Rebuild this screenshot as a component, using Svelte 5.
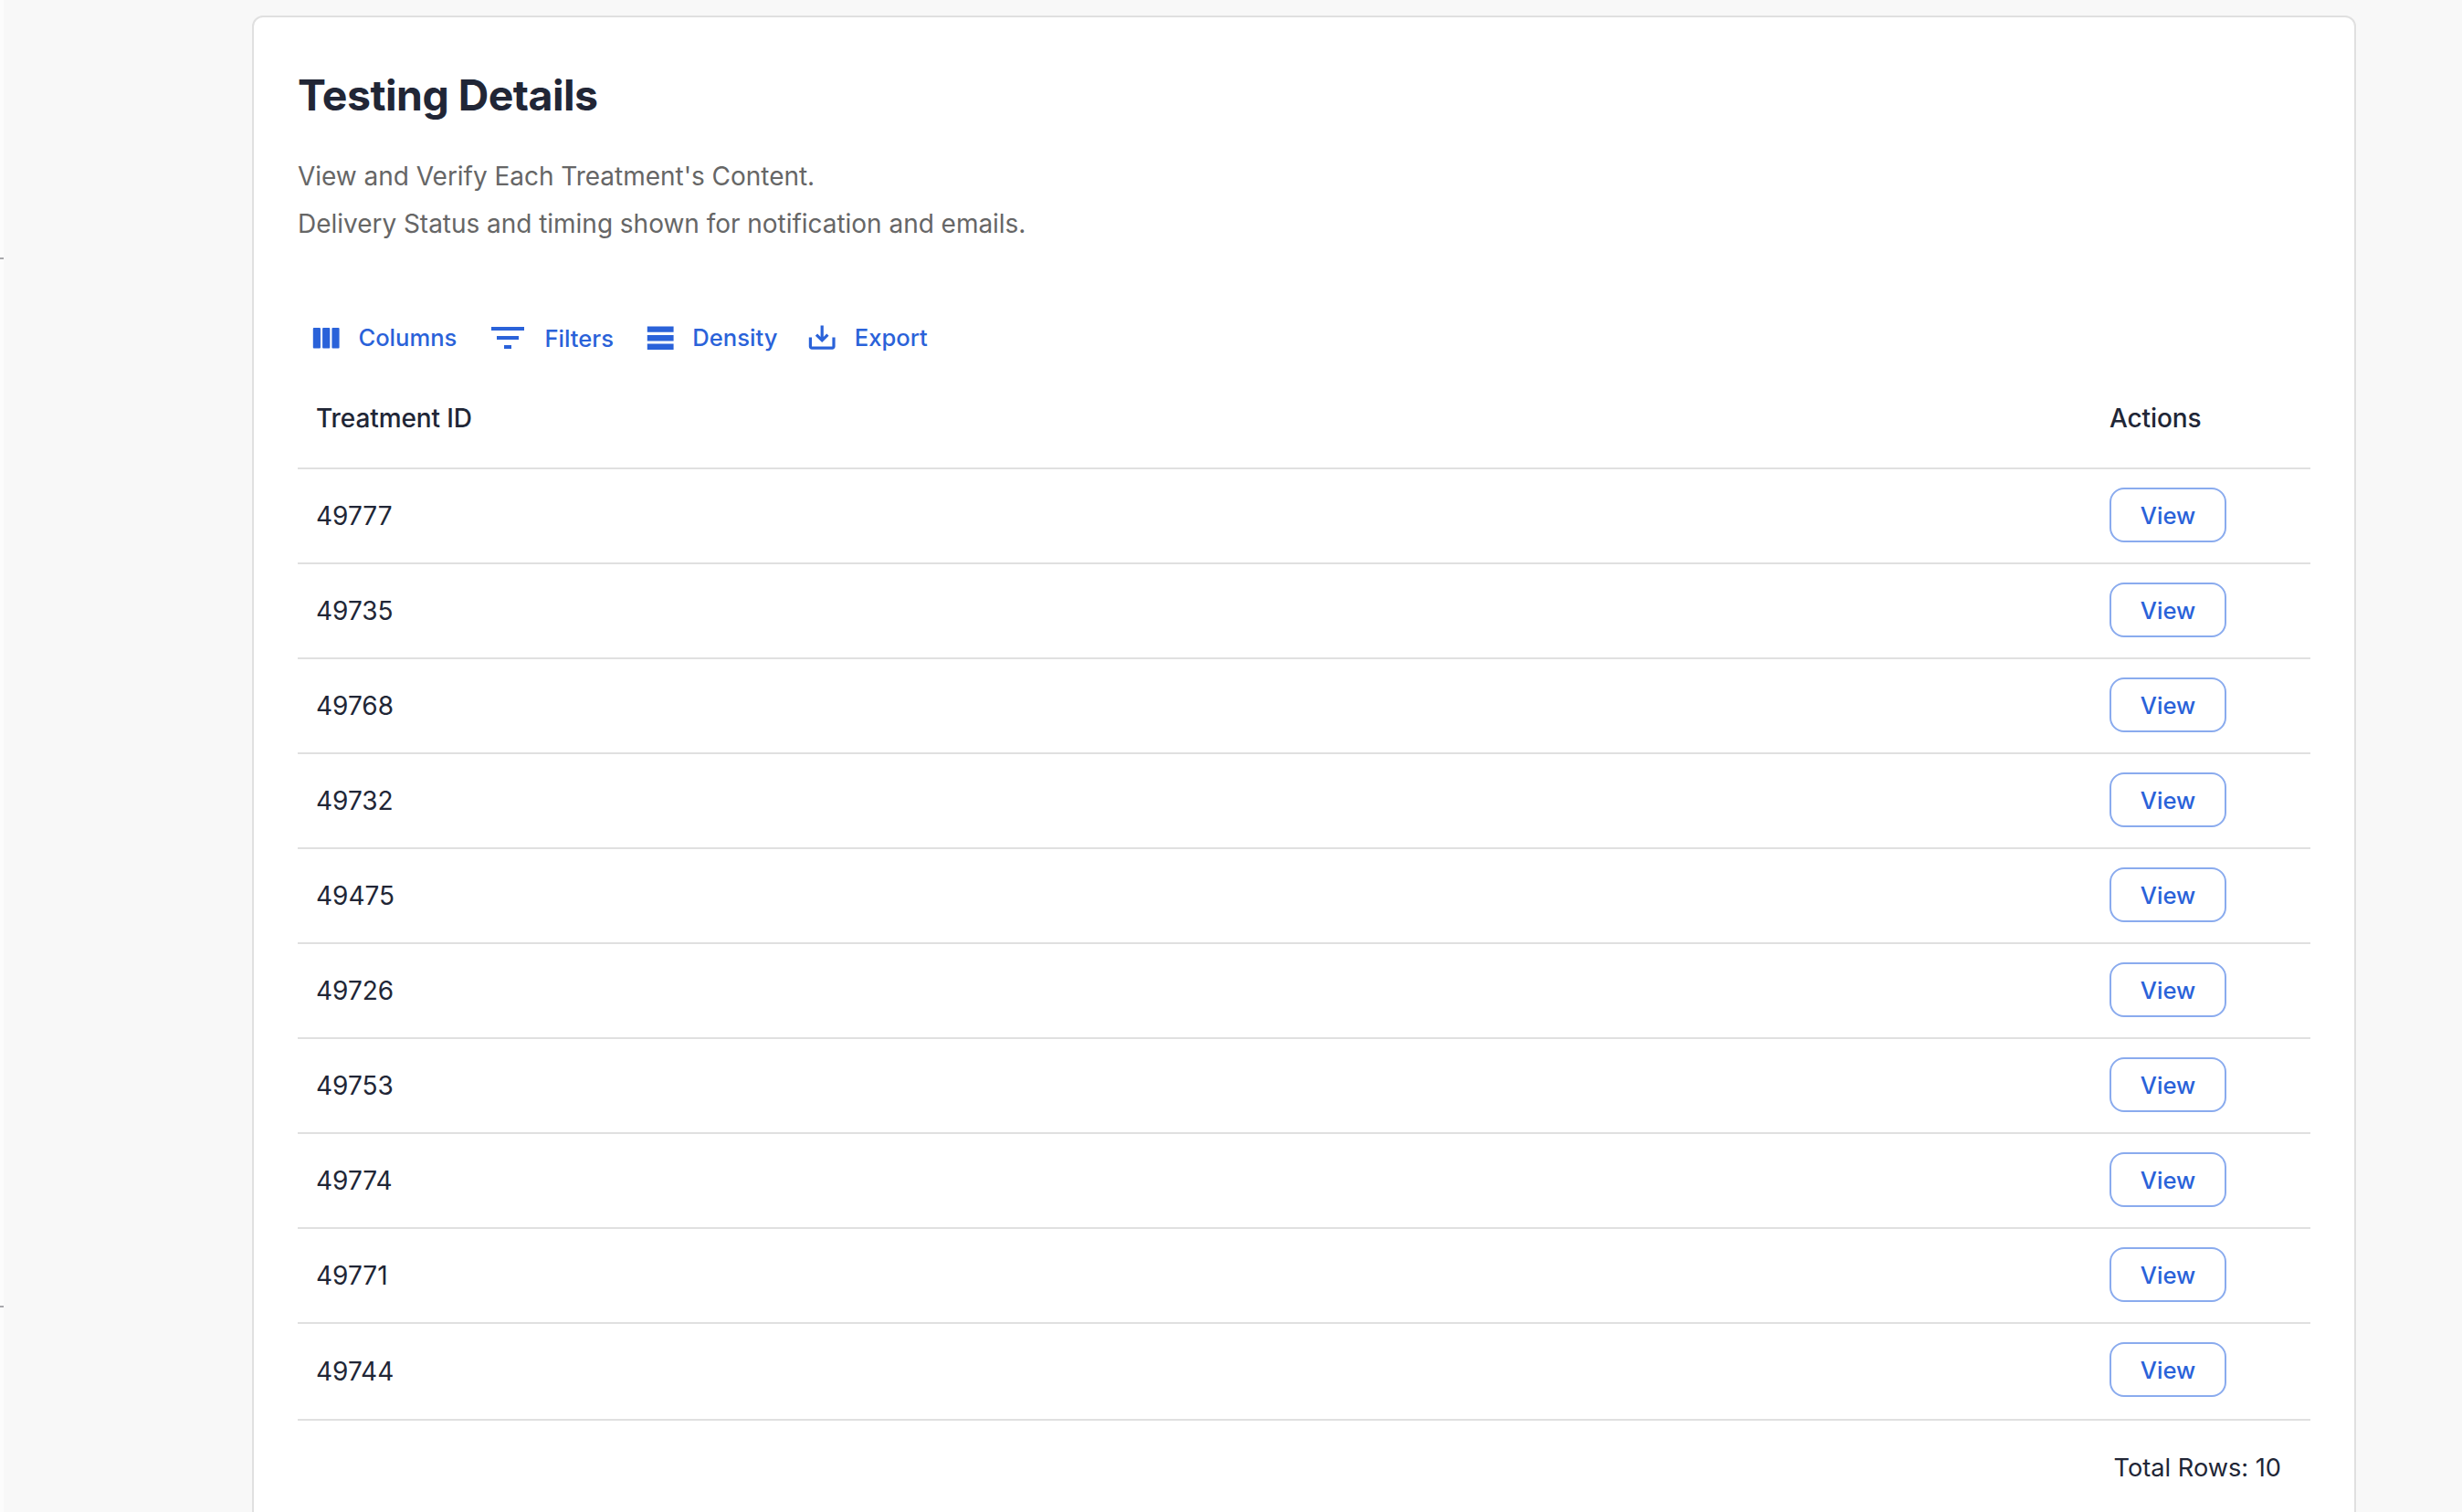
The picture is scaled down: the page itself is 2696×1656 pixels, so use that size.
<script>
  let rows = ['49777', '49735', '49768', '49732', '49475', '49726', '49753', '49774', '49771', '49744'];
</script>

<div class="shell">
  <aside class="rail">
    <span class="tick"></span>
    <span class="tick"></span>
  </aside>

  <main class="main">
    <section class="card">
      <h1>Testing Details</h1>
      <p class="sub">View and Verify Each Treatment's Content.</p>
      <p class="sub">Delivery Status and timing shown for notification and emails.</p>

      <div class="toolbar">
        <button class="tool">
          <svg class="ic" viewBox="0 0 24 24">
            <rect x="3" y="5" width="5.1" height="14" rx="0.6" />
            <rect x="9.45" y="5" width="5.1" height="14" rx="0.6" />
            <rect x="15.9" y="5" width="5.1" height="14" rx="0.6" />
          </svg>
          Columns
        </button>
        <button class="tool">
          <svg class="ic big" viewBox="0 0 24 24"><path d="M10 18h4v-2h-4v2zM3 6v2h18V6H3zm3 7h12v-2H6v2z" /></svg>
          Filters
        </button>
        <button class="tool">
          <svg class="ic" viewBox="0 0 24 24"><path d="M21 8H3V4h18v4zm0 2H3v4h18v-4zm0 6H3v4h18v-4z" /></svg>
          Density
        </button>
        <button class="tool export">
          <svg class="ic" viewBox="0 0 24 24"><path d="M19 11.5v6.3H5v-6.3H3v6.3c0 1.1.9 2 2 2h14c1.1 0 2-.9 2-2v-6.3zM16.6 10.4 15.2 9 13 11.2V3.5h-2v7.7L8.8 9l-1.4 1.4L12 15z" /></svg>
          Export
        </button>
      </div>

      <div class="table">
        <div class="row head">
          <span class="id">Treatment ID</span>
          <span class="act">Actions</span>
        </div>
        {#each rows as id}
          <div class="row">
            <span class="id">{id}</span>
            <span class="act"><button class="view">View</button></span>
          </div>
        {/each}
      </div>

      <div class="foot">Total Rows: 10</div>
    </section>
  </main>
</div>

<style>
  :global(body) {
    margin: 0;
    background: #f8f8f8;
  }

  .shell {
    display: flex;
    height: 1656px;
    overflow: hidden;
    font-family: Inter, "Liberation Sans", sans-serif;
    color: #212636;
  }

  .rail {
    flex: 0 0 4px;
    display: flex;
    flex-direction: column;
    gap: 1146px;
    padding-top: 282px;
    background: #fcfcfc;
  }
  .tick {
    display: block;
    height: 2px;
    background: #a8a8ac;
  }

  .main {
    flex: 1;
    padding: 17px 0 0 272px;
  }

  .card {
    box-sizing: border-box;
    width: 2304px;
    min-height: 1800px;
    padding: 53px 48px 0;
    background: #fff;
    border: 2px solid #e0e0e0;
    border-radius: 12px;
  }

  h1 {
    margin: 0 0 31px;
    font-size: 46.4px;
    line-height: 64px;
    font-weight: 700;
    letter-spacing: -0.5px;
  }

  .sub {
    margin: 0;
    font-size: 28px;
    line-height: 52px;
    letter-spacing: -0.03px;
    color: #666;
  }

  .toolbar {
    display: flex;
    align-items: center;
    gap: 32px;
    height: 48px;
    margin-top: 75px;
    padding-left: 12px;
  }
  .tool {
    display: flex;
    align-items: center;
    gap: 16px;
    padding: 0;
    border: 0;
    background: none;
    font: inherit;
    font-size: 25.6px;
    font-weight: 500;
    color: #2a62d9;
  }
  .tool.export {
    margin-left: -2px;
  }
  .ic {
    width: 38.4px;
    height: 38.4px;
    fill: currentColor;
  }
  .ic.big {
    width: 48px;
    height: 48px;
  }

  .row {
    display: flex;
    align-items: center;
    height: 102px;
    border-bottom: 2px solid #e0e0e0;
    font-size: 28px;
  }
  .row:last-child {
    height: 104px;
  }
  .row.head {
    height: 109px;
    padding-top: 9px;
    font-weight: 500;
    letter-spacing: -0.1px;
  }
  .id {
    flex: 1;
    padding-left: 20px;
  }
  .act {
    flex: 0 0 220px;
  }

  .view {
    display: block;
    width: 128px;
    height: 60px;
    margin-bottom: 2px;
    padding: 0;
    background: #fff;
    border: 2px solid #8aabee;
    border-radius: 16px;
    font: inherit;
    font-size: 25.6px;
    font-weight: 500;
    color: #2a62d9;
  }
  .row:last-child .view {
    margin-bottom: 4px;
  }

  .foot {
    padding: 32px 32px 0 0;
    text-align: right;
    font-size: 27.2px;
    line-height: 40px;
  }
</style>
